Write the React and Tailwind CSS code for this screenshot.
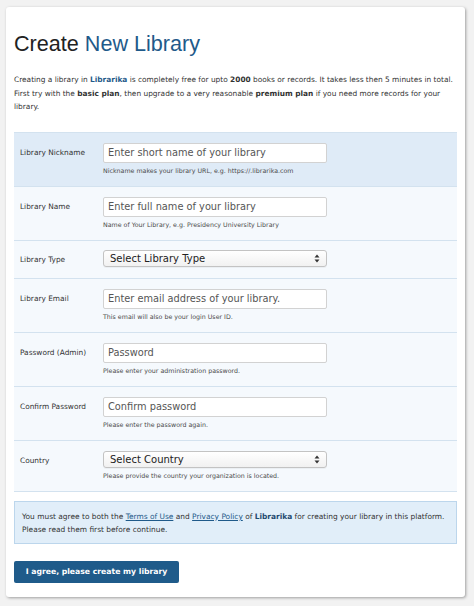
const lucida = { fontFamily: '"DejaVu Sans", Verdana, sans-serif' };

function Arrows() {
  return (
    <svg width="6" height="9" viewBox="0 0 6 9" className="shrink-0">
      <path d="M3 0.5 L5.5 3.5 H0.5 Z" fill="#333" />
      <path d="M3 8.5 L5.5 5.5 H0.5 Z" fill="#333" />
    </svg>
  );
}

function Row({ label, placeholder, help, select, active, last }) {
  return (
    <div
      className={
        "flex border-t border-[#d3e2ef] " +
        (active ? "bg-[#dfebf7] " : "bg-[#f5f9fd] ") +
        (last ? "border-b " : "") +
        (select && !help ? "pt-[9px] pb-[8px]" : "pt-[10px] pb-[10px]")
      }
    >
      <div className="w-[89px] shrink-0 pl-[6px] h-[20px] flex items-center text-[7.4px] text-[#333]">
        {label}
      </div>
      <div className="w-[224px]">
        {select ? (
          <div className="h-[17px] flex items-center justify-between px-[6px] rounded-[3px] border border-[#c3c3c3] bg-gradient-to-b from-white to-[#f1f1f1] text-[10px] text-[#222] shadow-[0_1px_0_rgba(0,0,0,0.04)]">
            <span>{placeholder}</span>
            <Arrows />
          </div>
        ) : (
          <input
            readOnly
            placeholder={placeholder}
            className="block w-full h-[20px] px-[4px] bg-white border border-[#d2d2d2] rounded-[2px] text-[9.8px] placeholder:text-[#555] outline-none"
            style={lucida}
          />
        )}
        {help && (
          <div className="mt-[3px] h-[10px] leading-[10px] text-[6.3px] text-[#4a4a4a] whitespace-nowrap">{help}</div>
        )}
      </div>
    </div>
  );
}

export default function App() {
  return (
    <div className="min-h-screen bg-[#f2f2f2] pt-[7px] pl-[6px]" style={lucida}>
      <div className="w-[459px] h-[590px] bg-white rounded-[3px] shadow-[1px_1px_3px_rgba(0,0,0,0.35)] px-[8px] pt-[24px]">
        <h1
          className="text-[21.6px] leading-[25px] text-[#222]"
          style={{ fontFamily: '"Liberation Sans", Arial, sans-serif' }}
        >
          Create <span className="text-[#1f5a8a]">New Library</span>
        </h1>

        <p className="mt-[17px] text-[7.42px] leading-[13.5px] text-[#333]">
          Creating a library in <b className="text-[#1f5a8a]">Librarika</b> is completely free for upto{" "}
          <b>2000</b> books or records. It takes less then 5 minutes in total. First try with the{" "}
          <b>basic plan</b>, then upgrade to a very reasonable <b>premium plan</b> if you need more
          records for your library.
        </p>

        <div className="mt-[18px]">
          <Row
            active
            label="Library Nickname"
            placeholder="Enter short name of your library"
            help="Nickname makes your library URL, e.g. https://.librarika.com"
          />
          <Row
            label="Library Name"
            placeholder="Enter full name of your library"
            help="Name of Your Library, e.g. Presidency University Library"
          />
          <Row label="Library Type" placeholder="Select Library Type" select />
          <Row
            label="Library Email"
            placeholder="Enter email address of your library."
            help="This email will also be your login User ID."
          />
          <Row
            label="Password (Admin)"
            placeholder="Password"
            help="Please enter your administration password."
          />
          <Row
            label="Confirm Password"
            placeholder="Confirm password"
            help="Please enter the password again."
          />
          <Row
            last
            select
            label="Country"
            placeholder="Select Country"
            help="Please provide the country your organization is located."
          />
        </div>

        <div className="mt-[9px] border border-[#bcd6ec] bg-[#e1eef9] px-[7px] pt-[8px] pb-[7px] text-[7.45px] leading-[13px] text-[#333]">
          You must agree to both the <span className="underline text-[#1f5a8a]">Terms of Use</span> and{" "}
          <span className="underline text-[#1f5a8a]">Privacy Policy</span> of{" "}
          <b className="text-[#1f4a70]">Librarika</b> for creating your library in this platform.
          Please read them first before continue.
        </div>

        <button className="mt-[17px] w-[165px] h-[22px] rounded-[2px] bg-[#1f5b8a] text-white text-[7.7px] font-bold">
          I agree, please create my library
        </button>
      </div>
    </div>
  );
}
